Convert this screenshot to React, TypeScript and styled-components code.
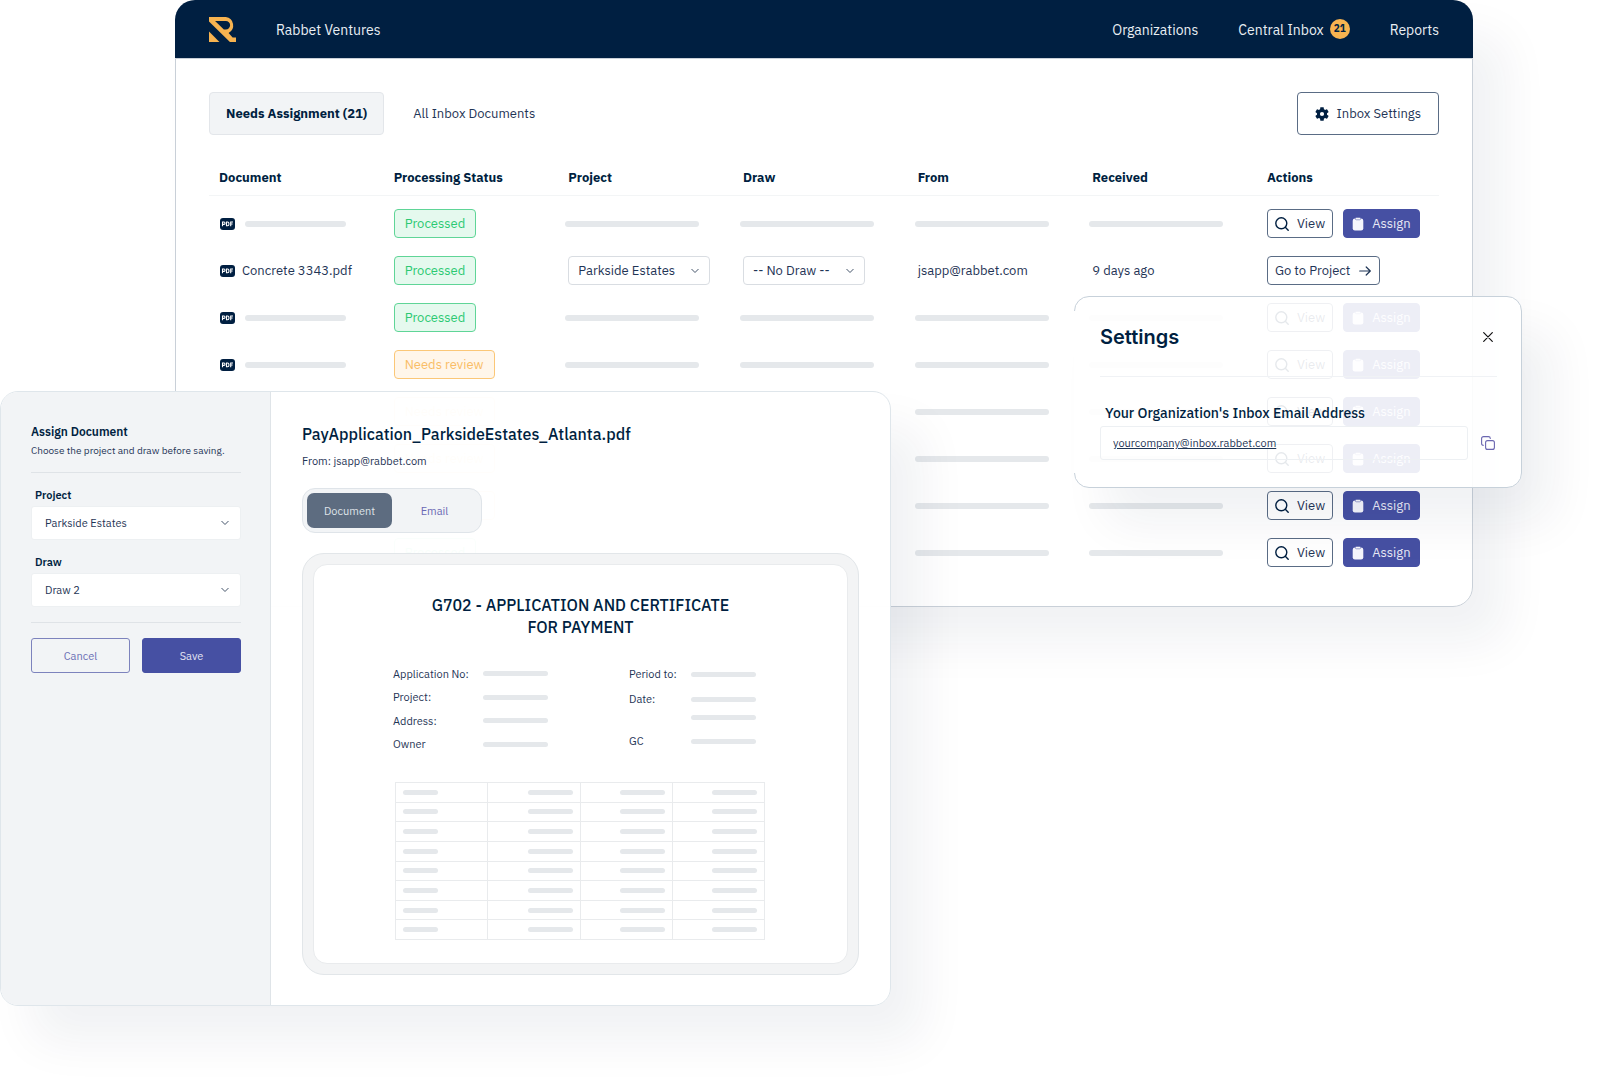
import React from "react";
import styled, { createGlobalStyle, css } from "styled-components";

const navy = "#001f41";
const ink = "#1f3556";
const indigo = "#4650a3";
const bar = "#e5e8eb";
const shadow = "32px 36px 48px rgba(0, 31, 65, 0.06)";

const GlobalStyle = createGlobalStyle`
  *, *::before, *::after { box-sizing: border-box; }
  body { margin: 0; background: #fff; overflow-x: hidden; }
  body, button, input, select { font-family: "IBM Plex Sans", Roboto, "Noto Sans", sans-serif; }
  h1, h2, h3, p, dl, dd, dt { margin: 0; }
`;

const Stage = styled.div`
  display: grid;
  align-items: start;
  min-height: 100vh;
  overflow: hidden;
  color: ${ink};
  font-size: 13px;
  line-height: 20px;
  > * { grid-area: 1 / 1; }
`;

/* Inbox window */
const InboxWindow = styled.main`
  margin: 0 127px 0 175px;
  border-radius: 20px;
  box-shadow: ${shadow};
`;
const TopBar = styled.header`
  display: flex;
  align-items: center;
  height: 58px;
  padding: 0 34px;
  border-radius: 20px 20px 0 0;
  background: ${navy};
  color: #e9eef3;
  font-size: 14px;
`;
const Company = styled.span`
  margin-left: 40px;
  padding-top: 2px;
`;
const Nav = styled.nav`
  display: flex;
  gap: 40px;
  margin-left: auto;
  padding-top: 2px;
`;
const NavLink = styled.a`
  display: flex;
  align-items: center;
  gap: 6px;
  color: inherit;
  text-decoration: none;
`;
const Count = styled.span`
  width: 20px;
  margin-bottom: 2px;
  border-radius: 50%;
  background: #f7b350;
  color: ${navy};
  font-size: 10px;
  font-weight: 700;
  text-align: center;
`;
const InboxBody = styled.div`
  padding: 33px 33px 30px;
  border: 1px solid #c9d0d8;
  border-radius: 0 0 20px 20px;
  background: #fff;
`;
const Toolbar = styled.div`
  display: flex;
  gap: 12px;
`;
const Tab = styled.button<{ $active?: boolean }>`
  height: 43px;
  padding: 0 16px;
  border: 1px solid ${(p) => (p.$active ? "#e3e6ea" : "transparent")};
  border-radius: 4px;
  background: ${(p) => (p.$active ? "#f2f4f6" : "transparent")};
  color: ${(p) => (p.$active ? navy : ink)};
  font-size: 13px;
  font-weight: ${(p) => (p.$active ? 700 : 400)};
`;
const SettingsButton = styled.button`
  display: flex;
  align-items: center;
  gap: 8px;
  height: 43px;
  margin-left: auto;
  padding: 0 17px;
  border: 1px solid #5a6c85;
  border-radius: 4px;
  background: #fff;
  color: ${ink};
  font-size: 13px;
`;
const InboxTable = styled.table`
  width: 100%;
  margin-top: 26px;
  border-collapse: collapse;
  table-layout: fixed;
`;
const HeadCell = styled.th`
  width: 14.2%;
  height: 34px;
  padding: 0 10px;
  border-bottom: 1px solid #f3f5f6;
  color: ${navy};
  font-weight: 700;
  text-align: left;
  &:last-child { width: auto; }
`;
const Spacer = styled.tbody`
  td { height: 5px; padding: 0; }
`;
const Cell = styled.td`
  height: 47px;
  padding: 0 0 0 10px;
  white-space: nowrap;
`;
const Line = styled.div<{ $indent?: boolean }>`
  display: flex;
  align-items: center;
  gap: ${(p) => (p.$indent ? 10 : 7)}px;
`;
const Bar = styled.div<{ $w: number; $h?: number; $out?: boolean }>`
  flex: none;
  width: ${(p) => p.$w}px;
  height: ${(p) => p.$h ?? 6}px;
  margin-left: ${(p) => (p.$out ? -3 : 0)}px;
  border-radius: 3px;
  background: ${bar};
`;
const Status = styled.span<{ $review?: boolean }>`
  display: inline-flex;
  align-items: center;
  height: 29px;
  padding: 0 10px;
  border: 1px solid ${(p) => (p.$review ? "#fbc777" : "#5fd597")};
  border-radius: 4px;
  background: ${(p) => (p.$review ? "#fff6ea" : "#e5f9ee")};
  color: ${(p) => (p.$review ? "#f9bd66" : "#2cc973")};
`;
const small = css`
  height: 29px;
  border-radius: 4px;
  font-size: 13px;
`;
const Action = styled.button<{ $solid?: boolean }>`
  ${small}
  display: flex;
  align-items: center;
  gap: 8px;
  padding: 0 ${(p) => (p.$solid ? 8 : 7)}px;
  border: 1px solid ${(p) => (p.$solid ? indigo : "#5a6c85")};
  background: ${(p) => (p.$solid ? indigo : "#fff")};
  color: ${(p) => (p.$solid ? "#e8e9f5" : ink)};
`;

const SelectWrap = styled.div<{ $w?: string; $inset: number }>`
  position: relative;
  width: ${(p) => p.$w ?? "100%"};
  svg {
    position: absolute;
    top: 50%;
    right: ${(p) => p.$inset}px;
    transform: translateY(-50%);
    pointer-events: none;
  }
`;
const InlineSelect = styled.select`
  ${small}
  display: block;
  width: 100%;
  padding: 0 9px;
  appearance: none;
  border: 1px solid #d9dde2;
  background: #fff;
  color: ${ink};
`;

/* Settings card */
const SettingsCard = styled.section`
  position: relative;
  justify-self: end;
  width: 448px;
  margin: 296px 78px 0 0;
  padding: 25px 22px 27px 25px;
  border: 1px solid #c7d1da;
  border-radius: 15px;
  background: rgba(255, 255, 255, 0.9);
  box-shadow: ${shadow};
  &::before {
    content: "";
    position: absolute;
    top: 14px;
    bottom: 14px;
    left: -1px;
    width: 1px;
    background: #fff;
  }
`;
const SettingsHead = styled.div`
  display: flex;
  align-items: center;
  justify-content: space-between;
  margin-right: 2px;
  padding-bottom: 24px;
  border-bottom: 1px solid #f0f2f5;
`;
const SettingsTitle = styled.h2`
  color: ${navy};
  font-family: Inter, sans-serif;
  font-size: 20px;
  font-weight: 600;
  line-height: 30px;
`;
const IconButton = styled.button`
  display: flex;
  padding: 4px;
  border: 0;
  background: none;
`;
const AddressLabel = styled.label`
  display: block;
  margin: 26px 0 3px 5px;
  color: ${navy};
  font-size: 14px;
  font-weight: 500;
`;
const AddressRow = styled.div`
  display: flex;
  align-items: center;
  gap: 9px;
`;
const AddressInput = styled.input`
  flex: 1;
  min-width: 0;
  height: 34px;
  padding: 0 12px;
  border: 1px solid #edf0f3;
  border-radius: 3px;
  background: transparent;
  color: ${ink};
  font-size: 11px;
  text-decoration: underline;
`;

/* Assign window */
const AssignWindow = styled.section`
  display: grid;
  grid-template-columns: 270px minmax(0, 1fr);
  width: 891px;
  margin-top: 391px;
  margin-bottom: 78px;
  border: 1px solid #dfe6eb;
  border-radius: 18px;
  background: rgba(255, 255, 255, 0.97);
  box-shadow: ${shadow};
  font-size: 11px;
  line-height: 16px;
`;
const Side = styled.form`
  padding: 31px 29px 0 30px;
  border-right: 1px solid #dfe4e8;
  border-radius: 17px 0 0 17px;
  background: #f2f4f6;
`;
const SideTitle = styled.h2`
  color: ${navy};
  font-size: 12px;
  font-weight: 600;
  line-height: 18px;
`;
const SideNote = styled.p`
  margin-top: 2px;
  padding-bottom: 13px;
  border-bottom: 1px solid #dfe3e7;
  font-size: 10px;
  white-space: nowrap;
`;
const Field = styled.div`
  margin-top: 14px;
`;
const FieldLabel = styled.label`
  display: block;
  margin: 0 0 3px 4px;
  color: ${navy};
  font-weight: 600;
`;
const FieldSelect = styled.select`
  display: block;
  width: 100%;
  height: 34px;
  padding: 0 13px;
  appearance: none;
  border: 1px solid #edf0f2;
  border-radius: 3px;
  background: #fff;
  color: ${ink};
  font-size: 11px;
`;
const SideButtons = styled.div`
  display: grid;
  grid-template-columns: 1fr 1fr;
  gap: 12px;
  margin-top: 15px;
  padding-top: 15px;
  border-top: 1px solid #dfe3e7;
`;
const SideButton = styled.button<{ $solid?: boolean }>`
  height: 35px;
  border: 1px solid ${(p) => (p.$solid ? indigo : "#7d83bd")};
  border-radius: 3px;
  background: ${(p) => (p.$solid ? indigo : "transparent")};
  color: ${(p) => (p.$solid ? "#e3e4f3" : "#6a6fb5")};
  font-size: 11px;
`;
const Content = styled.div`
  padding: 31px 31px 30px;
`;
const FileName = styled.h1`
  color: ${navy};
  font-size: 16px;
  font-weight: 500;
  line-height: 22px;
`;
const FromLine = styled.p`
  margin: 8px 0 19px;
`;
const Toggle = styled.div`
  display: grid;
  grid-template-columns: 85px 85px;
  width: max-content;
  padding: 4px;
  border: 1px solid #dfe4e9;
  border-radius: 13px;
  background: #f2f4f6;
`;
const ToggleButton = styled.button<{ $on?: boolean }>`
  height: 35px;
  border: 0;
  border-radius: 7px;
  background: ${(p) => (p.$on ? "#5d6c80" : "transparent")};
  color: ${(p) => (p.$on ? "#dfe3e8" : "#6a68b4")};
  font-size: 11px;
`;
const Frame = styled.div`
  margin-top: 20px;
  padding: 10px;
  border: 1px solid #e2e6e9;
  border-radius: 22px;
  background: #f3f4f5;
`;
const Paper = styled.article`
  padding: 29px 79px 23px;
  border: 1px solid #e9ebed;
  border-radius: 14px;
  background: #fff;
`;
const PaperTitle = styled.h3`
  color: ${navy};
  font-size: 16px;
  font-weight: 500;
  line-height: 22px;
  text-align: center;
`;
const Facts = styled.div`
  display: grid;
  grid-template-columns: 236px 1fr;
  align-items: start;
  margin-top: 24px;
`;
const FactList = styled.dl<{ $label: number; $rows: string; $h: number }>`
  display: grid;
  grid-template-columns: ${(p) => p.$label}px 65px;
  grid-template-rows: ${(p) => p.$rows};
  align-items: center;
  height: ${(p) => p.$h}px;
`;
const Ledger = styled.table`
  width: 370px;
  height: 158px;
  margin: 22px 0 0 2px;
  border-collapse: collapse;
  table-layout: fixed;
`;
const LedgerCell = styled.td`
  padding: 0 7px;
  border: 1px solid #e9ebed;
  &:not(:first-child) > div { margin-left: auto; }
`;

const Logo = () => (
  <svg width="27" height="25" viewBox="0 0 80 74" fill="#f7b350" aria-label="Rabbet">
    <path d="M0 0H50A25 25 0 0 1 58 47L70 61H80V74H62L0 13ZM18 12L44 37H50A12.500 12.500 0 0 0 50 12Z" fillRule="evenodd" />
    <path d="M0 43L31 74H0Z" />
  </svg>
);
const Pdf = () => (
  <svg width="16" height="12" viewBox="-1 0 16 12" aria-hidden="true">
    <rect width="15" height="12" rx="3" fill={navy} />
    <g fill="none" stroke="#fff" strokeWidth="1.100">
      <path d="M2.500 8.300V4H4Q5 4 5 5.200T4 6.400H2.500" />
      <path d="M6.500 4H7.500Q9 4 9 5.900T7.500 7.800H6.500Z" />
      <path d="M10.700 8.300V4H13M10.700 6H12.600" />
    </g>
  </svg>
);
const Gear = () => (
  <svg width="14" height="14" viewBox="2 2 20 20" fill={navy} aria-hidden="true">
    <path d="M19.140 12.940c.040-.300.060-.610.060-.940 0-.320-.020-.640-.070-.940l2.030-1.580c.180-.140.230-.410.120-.610l-1.920-3.320c-.120-.220-.370-.290-.590-.220l-2.390.960c-.500-.380-1.030-.700-1.620-.940L14.400 2.810c-.040-.240-.240-.410-.480-.410h-3.840c-.240 0-.430.170-.470.410l-.360 2.540c-.590.240-1.130.570-1.620.940l-2.390-.960c-.220-.080-.470 0-.590.220L2.740 8.870c-.120.210-.080.470.120.610l2.030 1.580c-.050.300-.090.630-.090.940s.020.640.070.940l-2.030 1.580c-.180.140-.230.410-.120.610l1.920 3.320c.120.220.370.290.590.220l2.390-.960c.500.380 1.030.700 1.620.940l.360 2.540c.050.240.240.410.480.410h3.840c.240 0 .440-.170.470-.410l.360-2.540c.590-.240 1.130-.560 1.620-.940l2.390.960c.220.080.470 0 .590-.220l1.920-3.320c.120-.220.070-.470-.120-.610l-2.010-1.580zM12 15a3 3 0 1 1 0-6 3 3 0 0 1 0 6z" />
  </svg>
);
const stroke = { fill: "none", strokeLinecap: "round", strokeLinejoin: "round" } as const;
const Search = () => (
  <svg width="14" height="14" viewBox="0 0 14 14" stroke={navy} strokeWidth="1.400" {...stroke} aria-hidden="true">
    <circle cx="6.300" cy="6.300" r="5.500" />
    <path d="M10.300 10.300L13.200 13.200" />
  </svg>
);
const Clipboard = () => (
  <svg width="12" height="14" viewBox="0 0 12 14" aria-hidden="true">
    <rect x="0.700" y="1.500" width="10.600" height="12" rx="2.200" fill="#f5f5fc" />
    <rect x="3.300" y="0.400" width="5.400" height="2.400" rx="1.200" fill="#f5f5fc" stroke={indigo} strokeWidth="0.500" />
  </svg>
);
const Arrow = () => (
  <svg width="14" height="10" viewBox="-1 0 14 10" stroke={ink} strokeWidth="1.200" {...stroke} aria-hidden="true">
    <path d="M0.700 5H11.300M7.200 1L11.300 5L7.200 9" />
  </svg>
);
const Chevron = () => (
  <svg width="8" height="5" viewBox="0 0 8 5" stroke="#44546a" strokeWidth="1" {...stroke} aria-hidden="true">
    <path d="M0.800 0.800L4 4L7.200 0.800" />
  </svg>
);
const Close = () => (
  <svg width="10" height="10" viewBox="0 0 10 10" stroke="#111" strokeWidth="1.200" {...stroke} aria-hidden="true">
    <path d="M0.700 0.700L9.300 9.300M9.300 0.700L0.700 9.300" />
  </svg>
);
const Copy = () => (
  <svg width="14" height="14" viewBox="0 0 14 14" stroke="#6a66b0" strokeWidth="1.100" {...stroke} aria-hidden="true">
    <rect x="4.600" y="4.600" width="8.800" height="8.800" rx="2" />
    <path d="M2.400 9.300C1.200 9.300 0.600 8.500 0.600 7.400V2.600Q0.600 0.600 2.600 0.600H7.400C8.500 0.600 9.300 1.200 9.300 2.400" />
  </svg>
);

const columns = ["Document", "Processing Status", "Project", "Draw", "From", "Received", "Actions"];
const rows = [
  { review: false },
  { review: false, filled: true },
  { review: false },
  { review: true },
  { review: true },
  { review: true },
  { review: true },
  { review: false },
];

const Skeleton = () => (
  <Cell>
    <Bar $w={134} $out />
  </Cell>
);

const InboxRow = ({ review, filled }: { review: boolean; filled?: boolean }) => (
  <tr>
    <Cell>
      <Line $indent={!filled}>
        <Pdf />
        {filled ? "Concrete 3343.pdf" : <Bar $w={101} />}
      </Line>
    </Cell>
    <Cell>
      <Line>
        <Status $review={review}>{review ? "Needs review" : "Processed"}</Status>
      </Line>
    </Cell>
    {filled ? (
      <>
        <Cell>
          <SelectWrap $w="142px" $inset={11}>
            <InlineSelect aria-label="Project">
              <option>Parkside Estates</option>
            </InlineSelect>
            <Chevron />
          </SelectWrap>
        </Cell>
        <Cell>
          <SelectWrap $w="122px" $inset={11}>
            <InlineSelect aria-label="Draw">
              <option>-- No Draw --</option>
            </InlineSelect>
            <Chevron />
          </SelectWrap>
        </Cell>
        <Cell>jsapp@rabbet.com</Cell>
        <Cell>9 days ago</Cell>
        <Cell>
          <Action>
            Go to Project <Arrow />
          </Action>
        </Cell>
      </>
    ) : (
      <>
        <Skeleton />
        <Skeleton />
        <Skeleton />
        <Skeleton />
        <Cell>
          <Line $indent>
            <Action>
              <Search /> View
            </Action>
            <Action $solid>
              <Clipboard /> Assign
            </Action>
          </Line>
        </Cell>
      </>
    )}
  </tr>
);

export default function App() {
  return (
    <Stage>
      <GlobalStyle />
      <InboxWindow>
        <TopBar>
          <Logo />
          <Company>Rabbet Ventures</Company>
          <Nav>
            <NavLink href="#organizations">Organizations</NavLink>
            <NavLink href="#inbox">
              Central Inbox <Count>21</Count>
            </NavLink>
            <NavLink href="#reports">Reports</NavLink>
          </Nav>
        </TopBar>
        <InboxBody>
          <Toolbar>
            <Tab $active>Needs Assignment (21)</Tab>
            <Tab>All Inbox Documents</Tab>
            <SettingsButton>
              <Gear /> Inbox Settings
            </SettingsButton>
          </Toolbar>
          <InboxTable>
            <thead>
              <tr>
                {columns.map((c) => (
                  <HeadCell key={c}>{c}</HeadCell>
                ))}
              </tr>
            </thead>
            <Spacer aria-hidden="true">
              <tr>
                <td colSpan={7} />
              </tr>
            </Spacer>
            <tbody>
              {rows.map((r, i) => (
                <InboxRow key={i} {...r} />
              ))}
            </tbody>
          </InboxTable>
        </InboxBody>
      </InboxWindow>

      <SettingsCard>
        <SettingsHead>
          <SettingsTitle>Settings</SettingsTitle>
          <IconButton aria-label="Close">
            <Close />
          </IconButton>
        </SettingsHead>
        <AddressLabel htmlFor="address">Your Organization's Inbox Email Address</AddressLabel>
        <AddressRow>
          <AddressInput id="address" readOnly defaultValue="yourcompany@inbox.rabbet.com" />
          <IconButton aria-label="Copy address">
            <Copy />
          </IconButton>
        </AddressRow>
      </SettingsCard>

      <AssignWindow>
        <Side>
          <SideTitle>Assign Document</SideTitle>
          <SideNote>Choose the project and draw before saving.</SideNote>
          <Field>
            <FieldLabel htmlFor="project">Project</FieldLabel>
            <SelectWrap $inset={12}>
              <FieldSelect id="project">
                <option>Parkside Estates</option>
              </FieldSelect>
              <Chevron />
            </SelectWrap>
          </Field>
          <Field>
            <FieldLabel htmlFor="draw">Draw</FieldLabel>
            <SelectWrap $inset={12}>
              <FieldSelect id="draw">
                <option>Draw 2</option>
              </FieldSelect>
              <Chevron />
            </SelectWrap>
          </Field>
          <SideButtons>
            <SideButton type="button">Cancel</SideButton>
            <SideButton type="button" $solid>
              Save
            </SideButton>
          </SideButtons>
        </Side>
        <Content>
          <FileName>PayApplication_ParksideEstates_Atlanta.pdf</FileName>
          <FromLine>From: jsapp@rabbet.com</FromLine>
          <Toggle>
            <ToggleButton $on>Document</ToggleButton>
            <ToggleButton>Email</ToggleButton>
          </Toggle>
          <Frame>
            <Paper>
              <PaperTitle>
                G702 - APPLICATION AND CERTIFICATE
                <br />
                FOR PAYMENT
              </PaperTitle>
              <Facts>
                <FactList $label={90} $rows="repeat(4, 1fr)" $h={94}>
                  {["Application No:", "Project:", "Address:", "Owner"].map((t) => (
                    <React.Fragment key={t}>
                      <dt>{t}</dt>
                      <dd>
                        <Bar $w={65} $h={5} />
                      </dd>
                    </React.Fragment>
                  ))}
                </FactList>
                <FactList $label={62} $rows="24px 26px 10px 38px" $h={98}>
                  {["Period to:", "Date:", "", "GC"].map((t) => (
                    <React.Fragment key={t}>
                      <dt>{t}</dt>
                      <dd>
                        <Bar $w={65} $h={5} />
                      </dd>
                    </React.Fragment>
                  ))}
                </FactList>
              </Facts>
              <Ledger>
                <tbody>
                  {Array.from({ length: 8 }, (_, r) => (
                    <tr key={r}>
                      {[35, 45, 45, 45].map((w, c) => (
                        <LedgerCell key={c}>
                          <Bar $w={w} $h={5} />
                        </LedgerCell>
                      ))}
                    </tr>
                  ))}
                </tbody>
              </Ledger>
            </Paper>
          </Frame>
        </Content>
      </AssignWindow>
    </Stage>
  );
}
